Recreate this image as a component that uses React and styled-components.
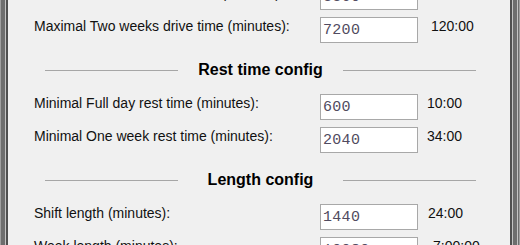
import React from 'react'
import styled, { createGlobalStyle } from 'styled-components'

const GlobalStyle = createGlobalStyle`
  html, body {
    margin: 0;
    padding: 0;
    background: #f0f0f0;
  }
  body {
    width: 520px;
    height: 245px;
    overflow: hidden;
  }
`

// dialog window, scrolled a bit so the first row is cut off at the top
const Frame = styled.div`
  width: 520px;
  height: 245px;
  overflow: hidden;
  box-sizing: border-box;
  background: #f0f0f0;
  font-family: "Liberation Sans", Arial, sans-serif;
  font-size: 14px;
  color: #111;
  box-shadow:
    inset 1px 0 0 #a0a0a0,
    inset 5px 0 0 #6e6e6e,
    inset 6px 0 0 #c4c4c4,
    inset 8px 0 0 #505050,
    inset -1px 0 0 #a0a0a0,
    inset -2px 0 0 #6e6e6e,
    inset -3px 0 0 #c4c4c4,
    inset -7px 0 0 #6e6e6e,
    inset -8px 0 0 #c4c4c4,
    inset -10px 0 0 #505050;
`
const Content = styled.div`
  margin-top: -16px;
  padding-left: 34px;
  display: flex;
  flex-direction: column;
`
const Row = styled.div`
  display: grid;
  grid-template-columns: 286px 98px auto;
  height: 26px;
  & + & {
    margin-top: 7px;
  }
`
const Label = styled.label`
  padding-top: 1px;
  line-height: 16px;
  white-space: nowrap;
`
const Field = styled.input`
  width: 98px;
  height: 26px;
  box-sizing: border-box;
  margin: 0;
  padding: 0 0 0 2px;
  border: 1px solid #a8a8a8;
  background: #fff;
  font-family: "Liberation Mono", "Courier New", monospace;
  font-size: 15px;
  letter-spacing: 0.3px;
  color: #514b60;
  outline: none;
`
const Time = styled.span`
  padding-left: ${p => 10 + (p.$shift || 0)}px;
  padding-top: 1px;
  line-height: 16px;
  white-space: nowrap;
`
const Heading = styled.div`
  display: grid;
  grid-template-columns: 133px 1fr 133px;
  align-items: center;
  width: 431px;
  height: 51px;
  margin-left: 11px;
  padding-top: 3px;
  box-sizing: border-box;
`
const Rule = styled.span`
  height: 1px;
  background: #a6a6a6;
`
const Title = styled.span`
  text-align: center;
  font-weight: bold;
  font-size: 16px;
  line-height: 20px;
  color: #000;
`

const sections = [
  {
    rows: [
      { label: 'Maximal One week drive time (minutes):', value: '3360', time: '56:00' },
      { label: 'Maximal Two weeks drive time (minutes):', value: '7200', time: '120:00', shift: 3 },
    ],
  },
  {
    title: 'Rest time config',
    rows: [
      { label: 'Minimal Full day rest time (minutes):', value: '600', time: '10:00', shift: -1 },
      { label: 'Minimal One week rest time (minutes):', value: '2040', time: '34:00', shift: -1 },
    ],
  },
  {
    title: 'Length config',
    rows: [
      { label: 'Shift length (minutes):', value: '1440', time: '24:00' },
      { label: 'Week length (minutes):', value: '10080', time: '7:00:00', shift: 5 },
    ],
  },
]

const App = () => {
  return (
    <>
      <GlobalStyle />
      <Frame>
        <Content>
          {sections.map((section, i) => (
            <React.Fragment key={i}>
              {section.title && (
                <Heading>
                  <Rule />
                  <Title>{section.title}</Title>
                  <Rule />
                </Heading>
              )}
              {section.rows.map(row => (
                <Row key={row.label}>
                  <Label>{row.label}</Label>
                  <Field value={row.value} readOnly />
                  <Time $shift={row.shift}>{row.time}</Time>
                </Row>
              ))}
            </React.Fragment>
          ))}
        </Content>
      </Frame>
    </>
  )
}

export default App
